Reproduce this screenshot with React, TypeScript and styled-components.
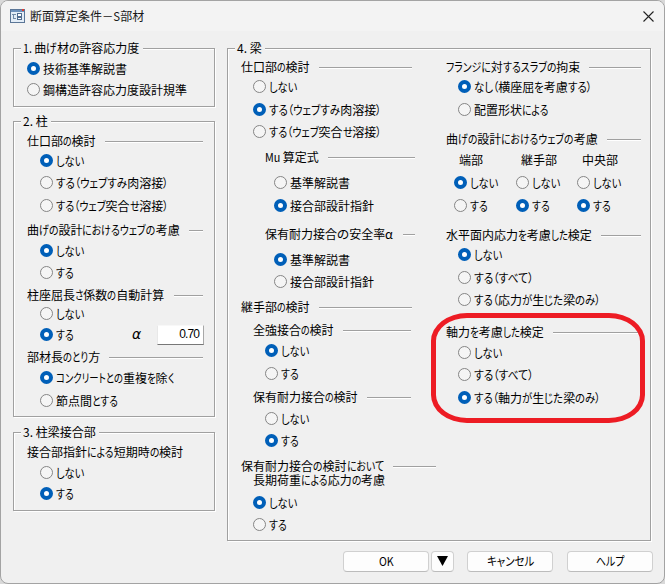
import React, { useLayoutEffect, useRef, useState } from 'react';
import styled, { createGlobalStyle } from 'styled-components';

const GlobalStyle = createGlobalStyle`
  * { box-sizing: border-box; }
  body {
    margin: 0;
    background: #d9d9d9;
    color: #000;
    font: 12px/13px "Noto Sans CJK JP", "Liberation Sans", sans-serif;
    overflow: hidden;
  }
`;

const Dialog = styled.div`
  position: relative;
  width: 665px;
  height: 584px;
  border: 1px solid #a3a3a3;
  border-radius: 8px;
  background: #f0f0f0;
  overflow: hidden;
`;

const TitleBar = styled.header`
  display: flex;
  align-items: center;
  height: 30px;
  padding: 0 10px 0 9px;
  background: #f3f3f3;
  color: #191919;
`;

const TitleText = styled.div`
  flex: 1;
  margin: 0 0 2px 5px;
`;

const Content = styled.main`
  display: flex;
  gap: 12px;
  padding: 17px 0 0 12px;
`;

const SideColumn = styled.div`
  display: flex;
  flex-direction: column;
`;

const Group = styled.section<{ $w: number; $h: number; $mt?: number }>`
  width: ${p => p.$w}px;
  height: ${p => p.$h}px;
  margin-top: ${p => p.$mt ?? 0}px;
  border: 1px solid #a0a0a0;
  box-shadow: 1px 1px 0 #fff, inset 1px 1px 0 #fff;
`;

const Legend = styled.h2`
  display: flex;
  align-items: center;
  width: fit-content;
  height: 15px;
  margin: -8px 0 0 7px;
  padding: 0 3px 2px 2px;
  background: #f0f0f0;
  font-size: 12px;
  font-weight: 400;
`;

const Columns = styled.div`
  display: flex;
`;

const Column = styled.div<{ $w: number }>`
  width: ${p => p.$w}px;
  flex: none;
`;

const Row = styled.div<{ $gap: number; $indent: number }>`
  display: flex;
  align-items: center;
  height: 13px;
  margin-top: ${p => p.$gap}px;
  padding-left: ${p => p.$indent}px;
`;

const HeadingText = styled.div`
  flex: none;
  margin-bottom: 2px;
`;

const Rule = styled.span<{ $w: number }>`
  flex: none;
  width: ${p => p.$w}px;
  height: 2px;
  margin: 1px 0 0 9px;
  border-top: 1px solid #a0a0a0;
  border-bottom: 1px solid #fff;
`;

const Dot = styled.span<{ $on?: boolean }>`
  flex: none;
  width: 13px;
  height: 13px;
  margin-right: 3px;
  border-radius: 50%;
  border: ${p => (p.$on ? '4px solid #005fb8' : '1px solid #858585')};
  background: ${p => (p.$on ? '#fff' : '#f5f5f5')};
`;

const Cell = styled.div<{ $w: number }>`
  display: flex;
  align-items: center;
  flex: none;
  width: ${p => p.$w}px;
`;

const FitBox = styled.span<{ $w: number }>`
  display: block;
  flex: none;
  width: ${p => p.$w}px;
  height: 13px;
  line-height: 13px;
  white-space: pre;
`;

const KanaRun = styled.span`
  display: inline-block;
  font-feature-settings: "palt";
  transform-origin: left center;
`;

const Alpha = styled.span`
  width: 10px;
  margin-left: 58px;
  font: italic 14px/13px "DejaVu Sans", sans-serif;
`;

const NumberField = styled.div`
  width: 47px;
  height: 20px;
  margin-left: 15px;
  padding-right: 4px;
  background: #fff;
  border: 1px solid;
  border-color: #f8f8f8 #a8a8a8 #777 #e8e8e8;
  text-align: right;
  font: 12px/16px "Liberation Sans", sans-serif;
  letter-spacing: -0.9px;
`;

const Footer = styled.footer`
  display: flex;
  height: 22px;
  margin: 10px 0 0 342px;
`;

const Button = styled.button<{ $w: number; $ml?: number }>`
  display: flex;
  align-items: center;
  justify-content: center;
  width: ${p => p.$w}px;
  height: 21px;
  margin: 0 0 0 ${p => p.$ml ?? 0}px;
  padding: 0 0 2px;
  border: 1px solid #d0d0d0;
  border-bottom-color: #bcbcbc;
  border-radius: 4px;
  background: #fdfdfd;
  color: #000;
  font: inherit;
`;

/* Red outline drawn over the axial force options */
const Highlight = styled.div`
  position: absolute;
  left: 430px;
  top: 312px;
  width: 214px;
  height: 110px;
  border: 5px solid #ed1c24;
  border-radius: 36px / 28px;
`;

/* Kanji keep their full pitch; the other runs are condensed so the label is `w` wide. */
function Fit({ t, w }: { t: string; w: number }) {
  const box = useRef<HTMLSpanElement>(null);
  const [fit, setFit] = useState<{ k: number; widths: number[] }>({ k: 1, widths: [] });
  const runs = t.match(/[\u4e00-\u9fff]+|[^\u4e00-\u9fff]+/g) ?? [];
  const isKanji = (s: string) => /[\u4e00-\u9fff]/.test(s);

  useLayoutEffect(() => {
    if (!box.current) return;
    const widths = Array.from(box.current.children).map(c => (c as HTMLElement).offsetWidth);
    const kana = runs.reduce((sum, r, i) => sum + (isKanji(r) ? 0 : widths[i]), 0);
    const kanji = runs.reduce((sum, r) => sum + (isKanji(r) ? r.length * 12 : 0), 0);
    if (kana > 0) setFit({ k: (w - kanji) / kana, widths });
  }, [t, w]);

  return (
    <FitBox ref={box} $w={w}>
      {runs.map((r, i) =>
        isKanji(r) ? (
          <span key={i}>{r}</span>
        ) : (
          <KanaRun
            key={i}
            style={{ transform: `scaleX(${fit.k})`, marginRight: (fit.widths[i] ?? 0) * (fit.k - 1) }}
          >
            {r}
          </KanaRun>
        ),
      )}
    </FitBox>
  );
}

type HeadProps = { t: string; w: number; gap: number; x: number; rule?: number };
const Heading = ({ t, w, gap, x, rule }: HeadProps) => (
  <Row $gap={gap} $indent={x}>
    <HeadingText><Fit t={t} w={w} /></HeadingText>
    {rule ? <Rule $w={rule} /> : null}
  </Row>
);

type OptionProps = { t?: string; w?: number; gap: number; x: number; on?: boolean; children?: React.ReactNode };
const Option = ({ t = 'しない', w = 28, gap, x, on, children }: OptionProps) => (
  <Row $gap={gap} $indent={x} role="radio" aria-checked={!!on}>
    <Dot $on={on} />
    <Fit t={t} w={w} />
    {children}
  </Row>
);

const Choice = ({ t, w, cell, on }: { t: string; w: number; cell: number; on?: boolean }) => (
  <Cell $w={cell} role="radio" aria-checked={!!on}>
    <Dot $on={on} />
    <Fit t={t} w={w} />
  </Cell>
);

const AppIcon = () => (
  <svg width="15" height="14" viewBox="0 0 15 14" shapeRendering="crispEdges">
    <rect x="0.5" y="0.5" width="14" height="13" fill="#e3edf7" stroke="#5b7697" />
    <rect x="1" y="1" width="13" height="2" fill="#6d91bb" />
    <rect x="12" y="0" width="2" height="2" fill="#e0392d" />
    <path d="M2 5.5h4M3.5 5v5M3 9.5h3" stroke="#728ba7" fill="none" />
    <rect x="7.5" y="4.5" width="4" height="3" fill="#fff" stroke="#536f91" />
    <rect x="7.5" y="8.5" width="4" height="2" fill="#fff" stroke="#536f91" />
  </svg>
);

export default function App() {
  return (
    <>
      <GlobalStyle />
      <Dialog>
        <TitleBar>
          <AppIcon />
          <TitleText><Fit t="断面算定条件－S部材" w={114} /></TitleText>
          <svg width="11" height="11" viewBox="0 0 11 11">
            <path d="M.5.5l10 10M10.5.5l-10 10" stroke="#222" strokeWidth="1.1" />
          </svg>
        </TitleBar>
        <Content>
          <SideColumn>
            <Group $w={202} $h={59}>
              <Legend><Fit t="1. 曲げ材の許容応力度" w={117} /></Legend>
              <Option gap={6} x={13} t="技術基準解説書" w={84} on />
              <Option gap={8} x={13} t="鋼構造許容応力度設計規準" w={144} />
            </Group>
            <Group $w={202} $h={296} $mt={14}>
              <Legend><Fit t="2. 柱" w={25} /></Legend>
              <Heading gap={6} x={13} t="仕口部の検討" w={69} rule={98} />
              <Option gap={6} x={26} on />
              <Option gap={9} x={26} t="する（ウェブすみ肉溶接）" w={112} />
              <Option gap={10} x={26} t="する（ウェブ突合せ溶接）" w={113} />
              <Heading gap={12} x={13} t="曲げの設計におけるウェブの考慮" w={153} rule={14} />
              <Option gap={7} x={26} on />
              <Option gap={9} x={26} t="する" w={18} />
              <Heading gap={10} x={13} t="柱座屈長さ係数の自動計算" w={138} rule={29} />
              <Option gap={5} x={26} />
              <Option gap={8} x={26} t="する" w={18} on>
                <Alpha>α</Alpha>
                <NumberField>0.70</NumberField>
              </Option>
              <Heading gap={10} x={13} t="部材長のとり方" w={73} rule={94} />
              <Option gap={7} x={26} t="コンクリートとの重複を除く" w={118} on />
              <Option gap={10} x={26} t="節点間とする" w={62} />
            </Group>
            <Group $w={202} $h={79} $mt={15}>
              <Legend><Fit t="3. 柱梁接合部" w={73} /></Legend>
              <Heading gap={6} x={13} t="接合部指針による短期時の検討" w={156} />
              <Option gap={7} x={26} />
              <Option gap={8} x={26} t="する" w={18} on />
            </Group>
          </SideColumn>
          <Group $w={424} $h={493}>
            <Legend><Fit t="4. 梁" w={25} /></Legend>
            <Columns>
              <Column $w={218}>
                <Heading gap={5} x={13} t="仕口部の検討" w={69} rule={93} />
                <Option gap={6} x={25} />
                <Option gap={10} x={25} t="する（ウェブすみ肉溶接）" w={112} on />
                <Option gap={9} x={25} t="する（ウェブ突合せ溶接）" w={113} />
                <Heading gap={13} x={37} t="Mu 算定式" w={54} rule={87} />
                <Option gap={12} x={46} t="基準解説書" w={60} />
                <Option gap={10} x={46} t="接合部設計指針" w={84} on />
                <Heading gap={16} x={37} t="保有耐力接合の安全率α" w={129} rule={12} />
                <Option gap={12} x={46} t="基準解説書" w={60} on />
                <Option gap={9} x={46} t="接合部設計指針" w={84} />
                <Heading gap={13} x={13} t="継手部の検討" w={69} rule={93} />
                <Heading gap={10} x={25} t="全強接合の検討" w={81} rule={68} />
                <Option gap={7} x={37} on />
                <Option gap={10} x={37} t="する" w={18} />
                <Heading gap={11} x={25} t="保有耐力接合の検討" w={105} rule={44} />
                <Option gap={8} x={37} />
                <Option gap={9} x={37} t="する" w={18} on />
                <Heading gap={13} x={13} t="保有耐力接合の検討において" w={143} rule={43} />
                <Heading gap={1} x={25} t="長期荷重による応力の考慮" w={132} />
                <Option gap={9} x={25} on />
                <Option gap={9} x={25} t="する" w={18} />
              </Column>
              <Column $w={204}>
                <Heading gap={5} x={0} t="フランジに対するスラブの拘束" w={134} rule={52} />
                <Option gap={6} x={12} t="なし（横座屈を考慮する）" w={118} on />
                <Option gap={10} x={12} t="配置形状による" w={74} />
                <Heading gap={17} x={0} t="曲げの設計におけるウェブの考慮" w={152} rule={34} />
                <Row $gap={7} $indent={13}>
                  <Cell $w={62}><Fit t="端部" w={24} /></Cell>
                  <Cell $w={61}><Fit t="継手部" w={36} /></Cell>
                  <Cell $w={40}><Fit t="中央部" w={36} /></Cell>
                </Row>
                <Row $gap={10} $indent={8}>
                  <Choice cell={62} t="しない" w={28} on />
                  <Choice cell={61} t="しない" w={28} />
                  <Choice cell={50} t="しない" w={28} />
                </Row>
                <Row $gap={10} $indent={8}>
                  <Choice cell={62} t="する" w={18} />
                  <Choice cell={61} t="する" w={18} on />
                  <Choice cell={50} t="する" w={18} on />
                </Row>
                <Heading gap={17} x={0} t="水平面内応力を考慮した検定" w={146} rule={40} />
                <Option gap={6} x={12} on />
                <Option gap={10} x={12} t="する（すべて）" w={59} />
                <Option gap={9} x={12} t="する（応力が生じた梁のみ）" w={127} />
                <Heading gap={20} x={0} t="軸力を考慮した検定" w={98} rule={86} />
                <Option gap={7} x={12} />
                <Option gap={9} x={12} t="する（すべて）" w={59} />
                <Option gap={10} x={12} t="する（軸力が生じた梁のみ）" w={127} on />
              </Column>
            </Columns>
          </Group>
        </Content>
        <Footer>
          <Button $w={86}><Fit t="OK" w={15} /></Button>
          <Button $w={23} $ml={2} aria-label="▼">
            <svg width="11" height="10" viewBox="0 0 11 10"><path d="M0 0h11L5.5 10z" /></svg>
          </Button>
          <Button $w={86} $ml={13}><Fit t="キャンセル" w={47} /></Button>
          <Button $w={86} $ml={14}><Fit t="ヘルプ" w={28} /></Button>
        </Footer>
        <Highlight />
      </Dialog>
    </>
  );
}
